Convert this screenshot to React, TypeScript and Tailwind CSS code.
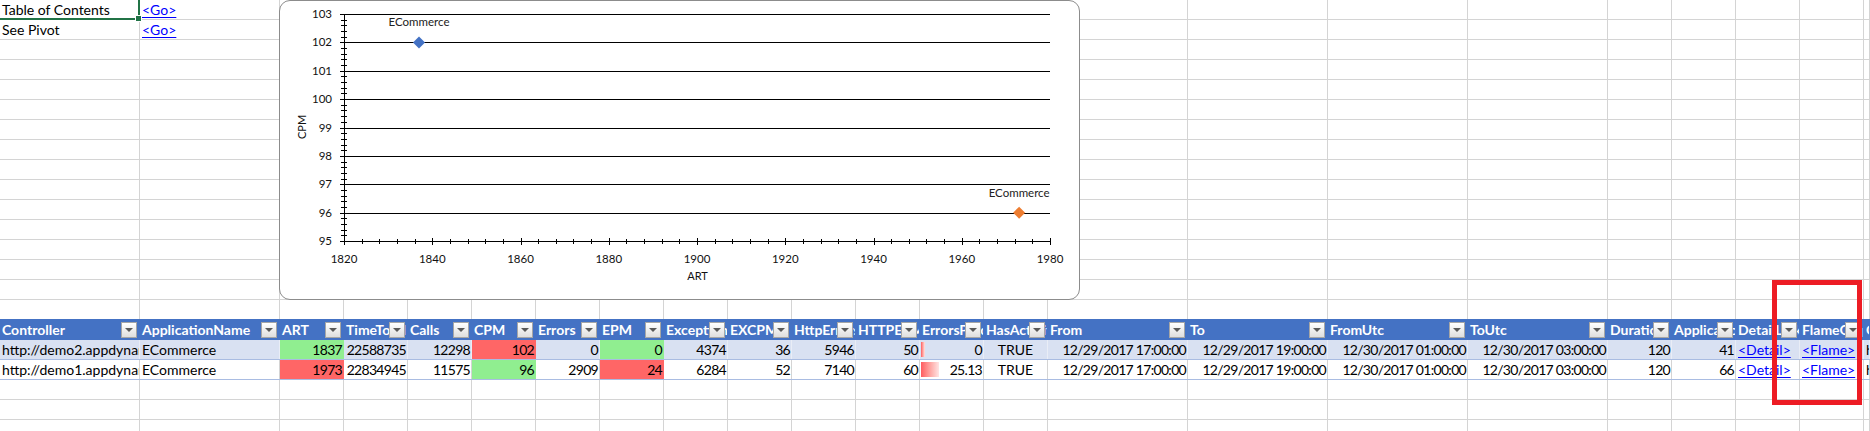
import React from 'react';

const W140 = 'w-[140px]';
const W64 = 'w-[64px]';

// sheet columns A..W
const COLS: string[] = [
  W140, W140,
  W64, W64, W64, W64, W64, W64, W64, W64, W64, W64, W64, W64,
  W140, W140, W140, W140,
  W64, W64, W64, W64,
  'flex-1 min-w-0',
];

const HEADERS = [
  'Controller', 'ApplicationName', 'ART', 'TimeTotal', 'Calls', 'CPM', 'Errors', 'EPM',
  'Exceptions', 'EXCPM', 'HttpErrors', 'HTTPEPM', 'ErrorsPercentage', 'HasActivity',
  'From', 'To', 'FromUtc', 'ToUtc', 'Duration', 'ApplicationID', 'DetailLink', 'FlameGraph',
  'ControllerLink',
];

const LEFT = [0, 1, 20, 21, 22];
const LINKS = [20, 21];

const FILL: Record<string, string> = {
  green: 'bg-[#90EE90] border-[#90EE90]',
  red: 'bg-[#FF6666] border-[#FF6666]',
};

interface DataRow {
  values: string[];
  fills: Record<number, string>;
  bar: number;
  banded: boolean;
}

const ROWS: DataRow[] = [
  {
    values: [
      'http://demo2.appdynamics.com', 'ECommerce', '1837', '22588735', '12298', '102', '0', '0',
      '4374', '36', '5946', '50', '0', 'TRUE', '12/29/2017 17:00:00', '12/29/2017 19:00:00',
      '12/30/2017 01:00:00', '12/30/2017 03:00:00', '120', '41', '<Detail>', '<Flame>',
      'http://demo2.appdynamics.com/controller',
    ],
    fills: { 2: 'green', 5: 'red', 7: 'green' },
    bar: 4,
    banded: true,
  },
  {
    values: [
      'http://demo1.appdynamics.com', 'ECommerce', '1973', '22834945', '11575', '96', '2909', '24',
      '6284', '52', '7140', '60', '25.13', 'TRUE', '12/29/2017 17:00:00', '12/29/2017 19:00:00',
      '12/30/2017 01:00:00', '12/30/2017 03:00:00', '120', '66', '<Detail>', '<Flame>',
      'http://demo1.appdynamics.com/controller',
    ],
    fills: { 2: 'red', 5: 'green', 7: 'red' },
    bar: 18,
    banded: false,
  },
];

const Cell: React.FC<{ w: string; className?: string; children?: React.ReactNode }> = ({ w, className = '', children }) => (
  <div className={`${w} shrink-0 h-full border-r overflow-hidden whitespace-nowrap relative px-[2px] leading-[19px] ${className}`}>
    {children}
  </div>
);

const FilterButton: React.FC = () => (
  <div className="absolute right-[2px] top-[2px] w-[16px] h-[16px] border border-[#a6a6a6] bg-gradient-to-b from-white to-[#dedede] flex items-center justify-center">
    <div className="w-0 h-0 border-l-[4px] border-r-[4px] border-t-[4px] border-l-transparent border-r-transparent border-t-[#595959]" />
  </div>
);

const EmptyRow: React.FC<{ border?: string; first?: React.ReactNode[] }> = ({ border = 'border-[#d4d4d4]', first = [] }) => (
  <div className={`flex h-[20px] border-b ${border}`}>
    {COLS.map((w, i) => (
      <Cell key={i} w={w} className="border-[#d4d4d4]">{first[i]}</Cell>
    ))}
  </div>
);

const Link: React.FC<{ children: React.ReactNode }> = ({ children }) => (
  <span className="text-[#0000ff] underline underline-offset-[2px]">{children}</span>
);

// chart geometry, local to the chart box
const X0 = 65, X1 = 771, Y0 = 14, Y1 = 241;
const xPos = (v: number) => X0 + ((v - 1820) / 160) * (X1 - X0);
const yPos = (v: number) => Y1 - ((v - 95) / 8) * (Y1 - Y0);
const px = (n: number) => Math.round(n) + 0.5;

const Chart: React.FC = () => {
  const yMajor = [95, 96, 97, 98, 99, 100, 101, 102, 103];
  const yMinor: number[] = [];
  for (let i = 0; i <= 40; i++) yMinor.push(95 + i * 0.2);
  const xMajor = [1820, 1840, 1860, 1880, 1900, 1920, 1940, 1960, 1980];
  const xMinor: number[] = [];
  for (let i = 0; i <= 40; i++) xMinor.push(1820 + i * 4);

  const diamond = (x: number, y: number) => `${x},${y - 6} ${x + 6},${y} ${x},${y + 6} ${x - 6},${y}`;

  return (
    <div className="absolute left-[279px] top-0 w-[801px] h-[300px] rounded-[11px] border border-[#8c8c8c] bg-white">
      <svg className="absolute left-[-1px] top-[-1px]" width={801} height={300} fontFamily="Lato, 'Liberation Sans', sans-serif">
        {yMajor.map((v) => (
          <line key={v} x1={X0} x2={X1} y1={px(yPos(v))} y2={px(yPos(v))} stroke="#000" strokeWidth={1} />
        ))}
        <line x1={px(X0)} x2={px(X0)} y1={Y0} y2={Y1 + 1} stroke="#000" />
        {yMinor.map((v, i) => (
          <line key={i} x1={i % 5 === 0 ? X0 - 4 : X0 - 3} x2={i % 5 === 0 ? X0 + 4 : X0 + 3} y1={px(yPos(v))} y2={px(yPos(v))} stroke="#000" />
        ))}
        {xMinor.map((v, i) => (
          <line key={i} x1={px(xPos(v))} x2={px(xPos(v))} y1={i % 5 === 0 ? Y1 - 3 : Y1 - 2} y2={i % 5 === 0 ? Y1 + 4 : Y1 + 3} stroke="#000" />
        ))}
        {yMajor.map((v) => (
          <text key={v} x={53} y={yPos(v) + 4} textAnchor="end" fontSize={11.5} fill="#111">{v}</text>
        ))}
        {xMajor.map((v) => (
          <text key={v} x={xPos(v)} y={263} textAnchor="middle" fontSize={11.5} fill="#111">{v}</text>
        ))}
        <text x={418.5} y={280} textAnchor="middle" fontSize={11} fill="#111">ART</text>
        <text x={0} y={0} transform="translate(27 127) rotate(-90)" textAnchor="middle" fontSize={11} fill="#111">CPM</text>

        <polygon points={diamond(xPos(1837), yPos(102))} fill="#4472C4" />
        <text x={xPos(1837)} y={26} textAnchor="middle" fontSize={11.5} fill="#222">ECommerce</text>
        <polygon points={diamond(xPos(1973), yPos(96))} fill="#ED7D31" />
        <text x={xPos(1973)} y={197} textAnchor="middle" fontSize={11.5} fill="#222">ECommerce</text>
      </svg>
    </div>
  );
};

export default function App() {
  const empty = Array.from({ length: 14 });
  const tail = Array.from({ length: 3 });

  return (
    <div className="relative w-[1870px] h-[431px] overflow-hidden bg-white text-black text-[14px] font-[Lato,'Liberation_Sans',sans-serif]">
      <EmptyRow first={['Table of Contents', <Link key="a">{'<Go>'}</Link>]} />
      <EmptyRow first={['See Pivot', <Link key="b">{'<Go>'}</Link>]} />
      {empty.map((_, i) => (
        <EmptyRow key={i} border={i === 13 ? 'border-[#4472C4]' : 'border-[#d4d4d4]'} />
      ))}

      {/* table header */}
      <div className="flex h-[20px] border-b border-[#4472C4] bg-[#4472C4]">
        {COLS.map((w, i) => (
          <Cell key={i} w={w} className="border-[#4472C4] font-bold text-white">
            {HEADERS[i]}
            {i < 22 && <FilterButton />}
          </Cell>
        ))}
      </div>

      {ROWS.map((row, r) => (
        <div key={r} className={`flex h-[20px] border-b border-[#a9bce2] ${row.banded ? 'bg-[#D9E1F2]' : 'bg-white'}`}>
          {COLS.map((w, i) => {
            const fill = row.fills[i];
            const numeric = !LEFT.includes(i) && i !== 13;
            const align = LEFT.includes(i) ? 'text-left' : i === 13 ? 'text-center' : 'text-right tracking-[-0.7px] pr-[1px]';
            const border = fill ? FILL[fill] : row.banded ? 'border-[#e9edf6]' : 'border-[#d4d4d4]';
            return (
              <Cell key={i} w={w} className={`${align} ${border}`}>
                {i === 12 && (
                  <div
                    className="absolute left-[1px] top-[2px] bottom-[2px] bg-gradient-to-r from-[#ff5a5f] to-[#ffe4e4]"
                    style={{ width: row.bar }}
                  />
                )}
                <span className={numeric ? 'relative' : 'relative'}>
                  {LINKS.includes(i) ? <Link>{row.values[i]}</Link> : row.values[i]}
                </span>
              </Cell>
            );
          })}
        </div>
      ))}

      {tail.map((_, i) => (
        <EmptyRow key={i} />
      ))}

      <Chart />

      {/* A1 selection */}
      <div className="absolute left-[-2px] top-[-2px] w-[142px] h-[22px] border-2 border-[#217346]" />
      <div className="absolute left-[135px] top-[15px] w-[7px] h-[7px] bg-[#217346] border border-white" />

      {/* annotation */}
      <div className="absolute left-[1772px] top-[280px] w-[90px] h-[125px] border-[5px] border-[#ED1C24]" />
    </div>
  );
}
